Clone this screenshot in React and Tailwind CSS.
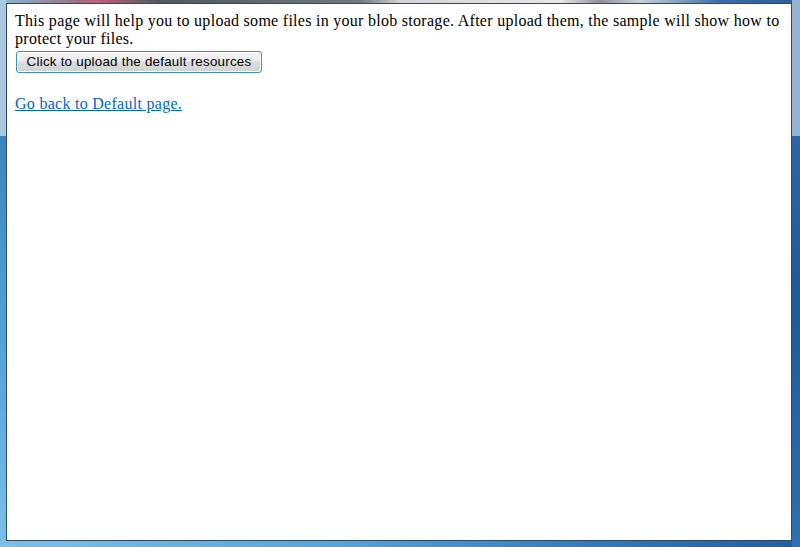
import React from "react";

const App = () => {
  return (
    <div className="relative w-[800px] h-[547px] overflow-hidden bg-[linear-gradient(to_right,#7fbfe6_0%,#5aa6d6_40%,#3577b8_75%,#225c9c_100%)] pt-[3px] pl-[6px] pr-[8px] pb-[6px]">
      {/* window frame top strip (blurred desktop behind aero glass) */}
      <div className="absolute top-0 left-0 right-0 h-[3px] bg-[linear-gradient(to_right,#8ab8d8_0%,#9a7080_10%,#c06080_12%,#505860_20%,#707880_45%,#d0d4d8_50%,#e8e8e8_70%,#9090a0_75%,#c8d0d8_80%,#3b6ea8_90%,#2b5c98_100%)]" />
      {/* side frames */}
      <div className="absolute top-0 left-0 w-[6px] h-[136px] bg-[#a9c9e0]" />
      <div className="absolute top-[136px] left-0 w-[6px] bottom-0 bg-[linear-gradient(to_bottom,#3a86bc_0%,#5aa8d8_60%,#7cc0e8_100%)]" />
      <div className="absolute top-0 right-0 w-[8px] h-[136px] bg-[#93b3d0]" />
      <div className="absolute top-[136px] right-0 w-[8px] bottom-0 bg-[linear-gradient(to_bottom,#2d66a4_0%,#1f5a98_40%,#2f70b0_100%)]" />
      <div className="relative w-full h-full bg-white border border-[#2c4a66] overflow-hidden">
        <div className="p-2 text-[16px] leading-[18px] text-black font-['Liberation_Serif',serif] tracking-[0.28px]">
          <div>
            This page will help you to upload some files in your blob storage. After upload them, the sample will show how to protect your files.
          </div>
          <button className="mt-[3px] ml-[1px] w-[246px] h-[22px] rounded-[3px] border border-[#3c8cc8] bg-[linear-gradient(to_bottom,#f4f4f4_0%,#ececec_45%,#dcdcdc_50%,#d2d2d2_100%)] text-[13.33px] leading-[16px] text-black tracking-[0.25px] font-['Liberation_Sans',Arial,sans-serif] shadow-[inset_0_0_0_1px_#ffffff]">
            Click to upload the default resources
          </button>
          <p className="mt-[22px]">
            <a href="#" className="text-[#0066cc] underline">Go back to Default page.</a>
          </p>
        </div>
      </div>
    </div>
  );
};

export default App;
